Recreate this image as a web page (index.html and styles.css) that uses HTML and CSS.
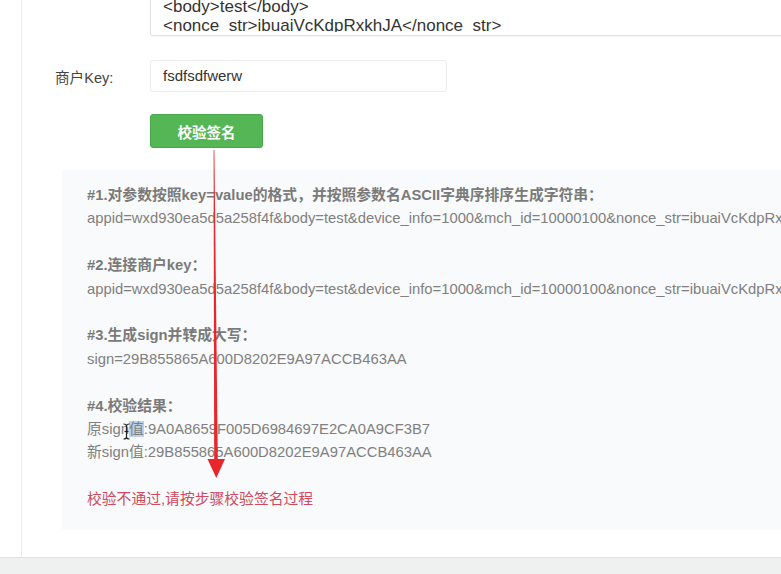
FILE: index.html
```html
<!DOCTYPE html>
<html lang="zh-CN">
<head>
<meta charset="utf-8">
<title>校验签名</title>
<link rel="stylesheet" href="styles.css">
</head>
<body>
<div class="page">
  <div class="main">
    <div class="row row-xml">
      <div class="label"></div>
      <div class="xml-box">
        <div class="xml-inner">
          <div>&lt;body&gt;test&lt;/body&gt;</div>
          <div>&lt;nonce_str&gt;ibuaiVcKdpRxkhJA&lt;/nonce_str&gt;</div>
        </div>
      </div>
    </div>
    <div class="row row-key">
      <div class="label">商户Key:</div>
      <div class="input">fsdfsdfwerw</div>
    </div>
    <div class="row row-btn">
      <div class="label"></div>
      <button class="btn">校验签名</button>
    </div>
    <div class="result">
      <div class="h">#1.对参数按照key=value的格式，并按照参数名ASCII字典序排序生成字符串：</div>
      <div class="t">appid=wxd930ea5d5a258f4f&amp;body=test&amp;device_info=1000&amp;mch_id=10000100&amp;nonce_str=ibuaiVcKdpRxkhJA</div>
      <div class="gap"></div>
      <div class="h">#2.连接商户key：</div>
      <div class="t">appid=wxd930ea5d5a258f4f&amp;body=test&amp;device_info=1000&amp;mch_id=10000100&amp;nonce_str=ibuaiVcKdpRxkhJA&amp;key=fsdfsdfwerw</div>
      <div class="gap"></div>
      <div class="h">#3.生成sign并转成大写：</div>
      <div class="t">sign=29B855865A600D8202E9A97ACCB463AA</div>
      <div class="gap"></div>
      <div class="h">#4.校验结果：</div>
      <div class="t">原sign<span class="sel">值</span>:9A0A8659F005D6984697E2CA0A9CF3B7</div>
      <div class="t">新sign值:29B855865A600D8202E9A97ACCB463AA</div>
      <div class="gap"></div>
      <div class="err">校验不通过,请按步骤校验签名过程</div>
    </div>
  </div>
  <div class="footer"></div>
</div>
<svg class="overlay" width="781" height="574" viewBox="0 0 781 574" aria-hidden="true">
  <polygon points="213.6,150 214.4,150 217.8,462 214.2,462" fill="#e8262b"/>
  <polygon points="207.5,459 225,459 216.3,478" fill="#e8262b"/>
  <g stroke="#222" stroke-width="1.2" fill="none">
    <path d="M123.5 424 Q126.5 424 126.5 426 L126.5 437 Q126.5 439 123.5 439"/>
    <path d="M129.5 424 Q126.5 424 126.5 426 M126.5 437 Q126.5 439 129.5 439"/>
    <path d="M124.5 431.5 L128.5 431.5"/>
  </g>
</svg>
</body>
</html>
```
FILE: styles.css
```css
html, body {
  margin: 0;
  padding: 0;
}
body {
  width: 781px;
  height: 574px;
  overflow: hidden;
  background: #ffffff;
  font-family: "Liberation Sans", Arial, "Noto Sans CJK SC", sans-serif;
  color: #333;
  position: relative;
}
.page {
  display: flex;
  flex-direction: column;
  height: 574px;
}
.main {
  height: 557px;
  margin-left: 21px;
  border-left: 1px solid #ececec;
  display: flex;
  flex-direction: column;
  overflow: hidden;
}
.footer {
  flex: 1;
  background: #eff1f1;
  border-top: 1px solid #e0e2e2;
}
.row {
  display: flex;
  align-items: center;
}
.label {
  width: 128px;
  box-sizing: border-box;
  padding-left: 33px;
  font-size: 14.6px;
  color: #444;
  flex-shrink: 0;
}
.xml-box {
  width: 700px;
  height: 35px;
  border: 1px solid #e3e3e3;
  border-top: none;
  border-radius: 0 0 3px 3px;
  box-shadow: 0 1px 2px rgba(0, 0, 0, 0.04);
  box-sizing: content-box;
  flex-shrink: 0;
}
.xml-inner {
  height: 32px;
  overflow: hidden;
  padding-left: 12px;
  font-size: 17px;
  line-height: 19px;
  color: #333;
  white-space: nowrap;
}
.xml-inner > div:first-child {
  margin-top: -3px;
}
.row-key {
  margin-top: 24px;
}
.input {
  width: 271px;
  height: 30px;
  border: 1px solid #ececec;
  border-radius: 3px;
  padding: 0 12px;
  font-size: 15px;
  line-height: 30px;
  color: #333;
}
.row-btn {
  margin-top: 22px;
}
.btn {
  width: 113px;
  height: 34px;
  background: #55b655;
  border: 1px solid #4aa84a;
  border-radius: 3px;
  color: #fff;
  font-family: inherit;
  font-size: 14.5px;
  font-weight: bold;
  padding: 0;
}
.result {
  margin-top: 22px;
  margin-left: 40px;
  background: #f9fafb;
  padding: 14px 0 18px 25px;
  font-size: 14.8px;
  line-height: 23.4px;
  color: #808080;
  white-space: nowrap;
}
.h {
  font-weight: bold;
  color: #7a7a7a;
}
.gap {
  height: 23.4px;
}
.sel {
  background: #b9d2ea;
}
.err {
  color: #cf4a5e;
  font-size: 14.8px;
}
.overlay {
  position: absolute;
  left: 0;
  top: 0;
  pointer-events: none;
}
```
